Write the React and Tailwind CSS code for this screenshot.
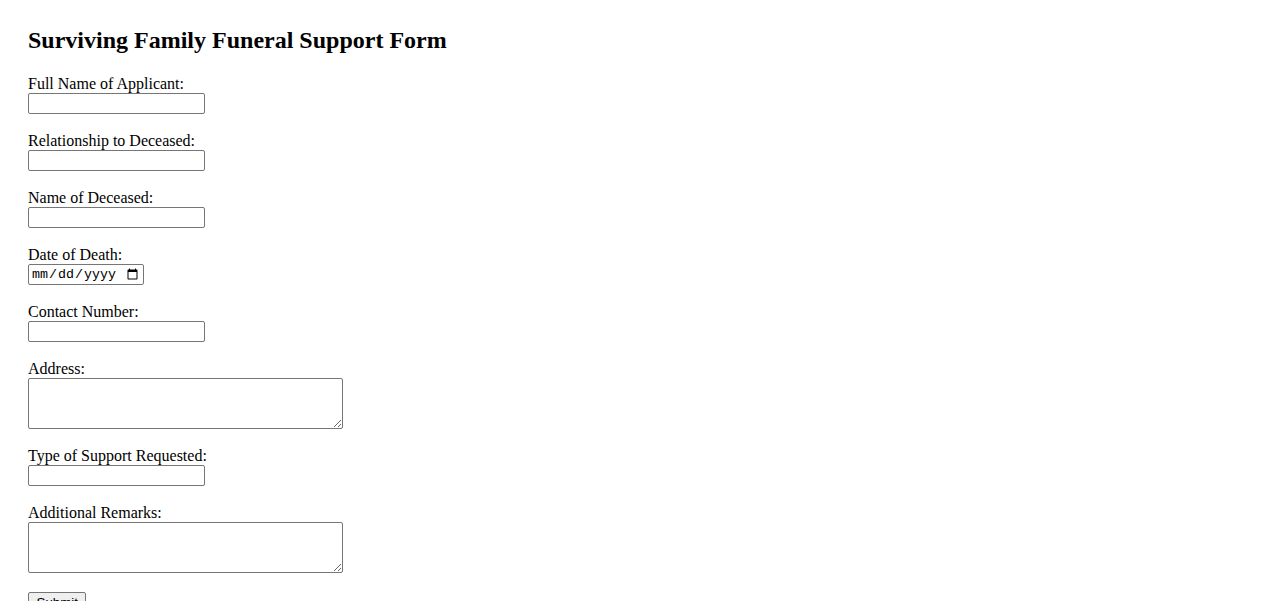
import React from "react";

const inputCls =
  "block w-[177px] h-[21px] border border-[#767676] rounded-[2px] px-[2px] py-[1px] bg-white text-[13.333px] font-['Liberation_Sans',Arial,sans-serif]";
const areaCls =
  "block w-[315px] h-[51px] border border-[#767676] rounded-[2px] px-[2px] py-[2px] bg-white text-[13.333px] font-['Liberation_Mono',monospace] resize";

function Field({ label, children }) {
  return (
    <div className="mb-[17px]">
      <label className="block h-[19px] leading-[19px]">{label}</label>
      {children}
    </div>
  );
}

export default function App() {
  return (
    <div className="min-h-screen bg-white text-black font-['Liberation_Serif','Times_New_Roman',serif] text-[16px] pl-[28px] pt-[26px]">
      <h2 className="text-[24px] font-bold leading-[28px] mb-[20px]">
        Surviving Family Funeral Support Form
      </h2>
      <form>
        <Field label="Full Name of Applicant:">
          <input type="text" className={inputCls} />
        </Field>
        <Field label="Relationship to Deceased:">
          <input type="text" className={inputCls} />
        </Field>
        <Field label="Name of Deceased:">
          <input type="text" className={inputCls} />
        </Field>
        <Field label="Date of Death:">
          <input
            type="date"
            className="block w-[116px] h-[21px] border border-[#767676] rounded-[2px] px-[2px] py-[1px] bg-white text-[13.333px] font-['Liberation_Mono',monospace]"
          />
        </Field>
        <Field label="Contact Number:">
          <input type="text" className={inputCls} />
        </Field>
        <Field label="Address:">
          <textarea className={areaCls} />
        </Field>
        <Field label="Type of Support Requested:">
          <input type="text" className={inputCls} />
        </Field>
        <Field label="Additional Remarks:">
          <textarea className={areaCls} />
        </Field>
        <button
          type="submit"
          className="h-[21px] px-[7.5px] border border-[#767676] rounded-[2px] bg-[#efefef] text-[13.333px] leading-[15px] font-['Liberation_Sans',Arial,sans-serif]"
        >
          Submit
        </button>
      </form>
    </div>
  );
}
